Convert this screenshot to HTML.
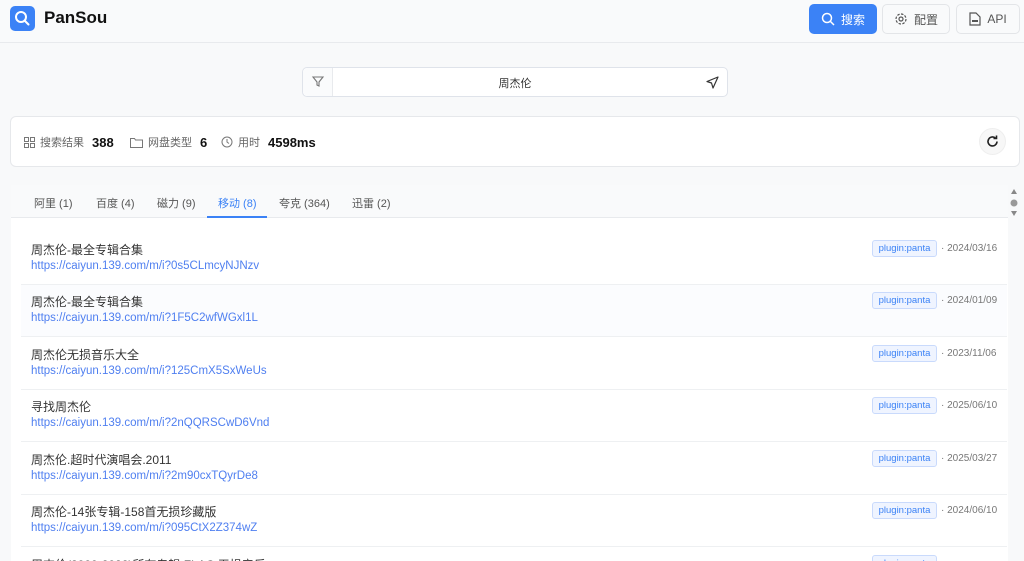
<!DOCTYPE html>
<html><head><meta charset="utf-8"><style>
*{box-sizing:border-box;margin:0;padding:0}
html,body{width:1024px;height:561px;overflow:hidden}
body{background:#f8f9fa;font-family:"Liberation Sans","Noto Sans CJK SC",sans-serif;color:#222;position:relative}
.hdr{position:absolute;left:0;top:0;width:1024px;height:43px;border-bottom:1px solid #e8eaed;background:#f9fafb}
.logo{position:absolute;left:10px;top:6px;width:25px;height:25px;border-radius:5px;background:#3b82f6}
.brand{position:absolute;left:44px;top:8px;font-size:17px;font-weight:bold;color:#111}
.btn{position:absolute;top:4px;height:30px;border-radius:5px;font-size:12px;display:flex;align-items:center;justify-content:center;gap:6px}
.b1{left:809px;width:68px;background:#3b82f6;color:#fff}
.b2{left:882px;width:68px;border:1px solid #e3e5e8;color:#555;background:#f9fafb}
.b3{left:956px;width:64px;border:1px solid #e3e5e8;color:#555;background:#f9fafb}
.search{position:absolute;left:302px;top:67px;width:426px;height:30px;border:1px solid #dfe3ea;border-radius:5px;background:#fff}
.search .f{position:absolute;left:0;top:0;width:30px;height:28px;border-right:1px solid #e8eaed;background:#fafbfc;border-radius:5px 0 0 5px}
.search .q{position:absolute;left:0;right:0;top:7px;text-align:center;font-size:11px;color:#333}
.stats{position:absolute;left:10px;top:116px;width:1010px;height:51px;background:#fff;border:1px solid #e6e8eb;border-radius:6px}
.st{position:absolute;top:17px;font-size:11px;color:#666;display:flex;align-items:center;gap:5px}
.st b{font-size:13px;color:#111;margin-left:3px}
.ref{position:absolute;right:13px;top:11px;width:27px;height:27px;border-radius:50%;border:1px solid #eee;background:#f7f7f7}
.panel{position:absolute;left:11px;top:185px;width:997px;height:376px;background:#fff;overflow:hidden}
.tabs{height:33px;background:#f9fafb;border-bottom:1px solid #e8eaed;position:relative}
.tab{position:absolute;top:10px;font-size:11px;color:#555}
.tab.a{color:#3b82f6}
.ul{position:absolute;left:196px;width:60px;top:31px;height:2px;background:#3b82f6}
.row{position:absolute;left:11px;width:986px;height:52px;border-bottom:1px solid #eef0f2}
.row .t{position:absolute;left:10px;top:8px;font-size:12px;color:#333}
.row .l{position:absolute;left:10px;top:27px;font-size:11.5px;color:#4f7ff0}
.row .tag{position:absolute;left:851px;top:7px;height:17px;width:65px;border:1px solid #c9dafc;background:#eff4ff;border-radius:3px;font-size:9.5px;color:#3b82f6;text-align:center;line-height:15px}
.row .d{position:absolute;left:920px;top:10px;font-size:10px;color:#777}
.sb{position:absolute;left:1009px;top:185px;width:10px;height:40px}
</style></head><body>
<div class="hdr">
<div class="logo"><svg width="25" height="25" viewBox="0 0 25 25"><circle cx="11" cy="11" r="5" fill="none" stroke="#fff" stroke-width="2"/><path d="M14.5 14.5L18.5 18.5" stroke="#fff" stroke-width="2" stroke-linecap="round"/></svg></div>
<div class="brand">PanSou</div>
<div class="btn b1"><svg width="14" height="14" viewBox="0 0 14 14"><circle cx="6" cy="6" r="4.5" fill="none" stroke="#fff" stroke-width="1.5"/><path d="M9.5 9.5L13 13" stroke="#fff" stroke-width="1.5"/></svg>搜索</div>
<div class="btn b2"><svg width="14" height="14" viewBox="0 0 14 14"><circle cx="7" cy="7" r="2" fill="none" stroke="#555" stroke-width="1.2"/><circle cx="7" cy="7" r="5" fill="none" stroke="#555" stroke-width="1.2" stroke-dasharray="2.5 1.4"/></svg>配置</div>
<div class="btn b3"><svg width="12" height="14" viewBox="0 0 12 14"><path d="M1 1h6l4 4v8H1z" fill="none" stroke="#555" stroke-width="1.2"/><rect x="3" y="8" width="6" height="2" fill="#555"/></svg>API</div>
</div>
<div class="search"><div class="f"><svg width="30" height="28" viewBox="0 0 30 28"><path d="M10 9h10l-4 5v4l-2-1v-3z" fill="none" stroke="#777" stroke-width="1.1"/></svg></div><div class="q">周杰伦</div>
<svg style="position:absolute;right:8px;top:8px" width="13" height="13" viewBox="0 0 13 13"><path d="M12 1L1 5.5l4.5 1.5L7 12z" fill="none" stroke="#333" stroke-width="1.2" stroke-linejoin="round"/></svg></div>
<div class="stats">
<div class="st" style="left:13px"><svg width="11" height="11" viewBox="0 0 11 11"><g fill="none" stroke="#777"><rect x=".5" y=".5" width="4" height="4"/><rect x="6.5" y=".5" width="4" height="4"/><rect x=".5" y="6.5" width="4" height="4"/><rect x="6.5" y="6.5" width="4" height="4"/></g></svg>搜索结果 <b>388</b></div>
<div class="st" style="left:119px"><svg width="13" height="11" viewBox="0 0 13 11"><path d="M.5 1.5h4l1 1.5h7v7.5H.5z" fill="none" stroke="#777"/></svg>网盘类型 <b>6</b></div>
<div class="st" style="left:210px"><svg width="12" height="12" viewBox="0 0 12 12"><circle cx="6" cy="6" r="5" fill="none" stroke="#777"/><path d="M6 3v3l2 1.5" fill="none" stroke="#777"/></svg>用时 <b>4598ms</b></div>
<div class="ref"><svg width="25" height="25" viewBox="0 0 25 25"><path d="M17 12.5a4.5 4.5 0 1 1-1.5-3.4" fill="none" stroke="#222" stroke-width="1.6"/><path d="M16.5 6.5v3h-3" fill="none" stroke="#222" stroke-width="1.6"/></svg></div>
</div>
<div class="panel">
<div class="tabs">
<div class="tab" style="left:23px">阿里 (1)</div>
<div class="tab" style="left:85px">百度 (4)</div>
<div class="tab" style="left:146px">磁力 (9)</div>
<div class="tab a" style="left:207px">移动 (8)</div>
<div class="tab" style="left:268px">夸克 (364)</div>
<div class="tab" style="left:341px">迅雷 (2)</div>
<div class="ul"></div>
</div>
<div class="row" style="top:48px;left:10px;height:52px"><div class="t">周杰伦-最全专辑合集</div><div class="l">https://caiyun.139.com/m/i?0s5CLmcyNJNzv</div><div class="tag">plugin:panta</div><div class="d">· 2024/03/16</div></div>
<div class="row" style="top:100px;left:10px;background:#fbfcfe"><div class="t">周杰伦-最全专辑合集</div><div class="l">https://caiyun.139.com/m/i?1F5C2wfWGxl1L</div><div class="tag">plugin:panta</div><div class="d">· 2024/01/09</div></div>
<div class="row" style="top:153px;left:10px"><div class="t">周杰伦无损音乐大全</div><div class="l">https://caiyun.139.com/m/i?125CmX5SxWeUs</div><div class="tag">plugin:panta</div><div class="d">· 2023/11/06</div></div>
<div class="row" style="top:205px;left:10px"><div class="t">寻找周杰伦</div><div class="l">https://caiyun.139.com/m/i?2nQQRSCwD6Vnd</div><div class="tag">plugin:panta</div><div class="d">· 2025/06/10</div></div>
<div class="row" style="top:258px;left:10px"><div class="t">周杰伦.超时代演唱会.2011</div><div class="l">https://caiyun.139.com/m/i?2m90cxTQyrDe8</div><div class="tag">plugin:panta</div><div class="d">· 2025/03/27</div></div>
<div class="row" style="top:310px;left:10px"><div class="t">周杰伦-14张专辑-158首无损珍藏版</div><div class="l">https://caiyun.139.com/m/i?095CtX2Z374wZ</div><div class="tag">plugin:panta</div><div class="d">· 2024/06/10</div></div>
<div class="row" style="top:363px;left:10px;height:13px;border-bottom:none"><div class="t">周杰伦(2000-2022)所有专辑 FLAC 无损音乐</div><div class="tag">plugin:panta</div></div>
</div>
<svg class="sb" width="10" height="40" viewBox="0 0 10 40"><path d="M2 9l3-5 3 5z" fill="#888"/><circle cx="5" cy="18" r="3.5" fill="#999"/><path d="M2 26l3 5 3-5z" fill="#888"/></svg>
</body></html>
